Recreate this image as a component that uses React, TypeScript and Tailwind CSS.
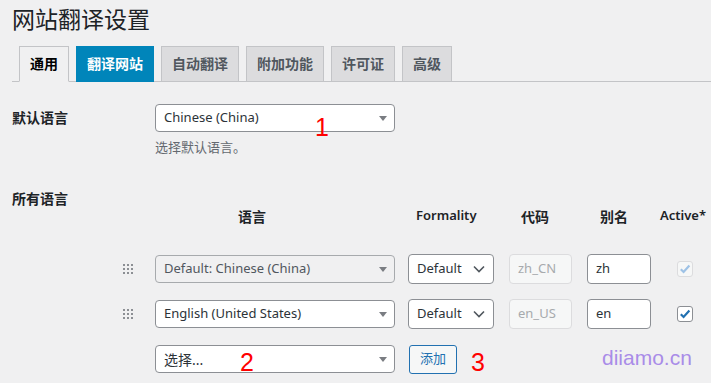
import type { ReactNode } from 'react';

const tabs = [
  { label: '通用', kind: 'active' },
  { label: '翻译网站', kind: 'blue' },
  { label: '自动翻译', kind: 'plain' },
  { label: '附加功能', kind: 'plain' },
  { label: '许可证', kind: 'plain' },
  { label: '高级', kind: 'plain' },
];

const tabClass: Record<string, string> = {
  active: 'bg-[#f0f0f1] border-[#c3c4c7] border-b-[#f0f0f1] text-black',
  blue: 'bg-[#0085ba] border-[#0085ba] text-white',
  plain: 'bg-[#dcdcde] border-[#c3c4c7] text-[#50575e]',
};

function Triangle() {
  return (
    <svg width="8" height="5" viewBox="0 0 8 5" className="shrink-0">
      <path d="M0 0 H8 L4 5 Z" fill="#7a7d82" />
    </svg>
  );
}

function Chevron() {
  return (
    <svg width="12" height="8" viewBox="0 0 12 8" className="shrink-0">
      <path d="M1 1.5 L6 6.5 L11 1.5" fill="none" stroke="#50575e" strokeWidth="1.6" />
    </svg>
  );
}

function DragHandle() {
  const dots: ReactNode[] = [];
  for (let r = 0; r < 3; r++) {
    for (let c = 0; c < 3; c++) {
      dots.push(<rect key={`${r}-${c}`} x={c * 4} y={r * 4} width="2" height="2" fill="#8c8f94" />);
    }
  }
  return (
    <svg width="10" height="10" viewBox="0 0 10 10" className="shrink-0">
      {dots}
    </svg>
  );
}

function Check({ disabled }: { disabled?: boolean }) {
  return (
    <div
      className={
        disabled
          ? 'w-4 h-4 rounded-[3px] border border-[#dcdcde] bg-[#f6f7f7] flex items-center justify-center'
          : 'w-4 h-4 rounded-[3px] border border-[#8c8f94] bg-white flex items-center justify-center'
      }
    >
      <svg width="12" height="12" viewBox="0 0 12 12">
        <path
          d="M1.8 6.2 L4.6 9 L10.4 2.6"
          fill="none"
          stroke={disabled ? '#9ec2e6' : '#2271b1'}
          strokeWidth="2.2"
        />
      </svg>
    </div>
  );
}

export default function App() {
  return (
    <div className="relative w-[711px] h-[383px] overflow-hidden bg-[#f0f0f1] text-[14px] text-[#2c3338] font-['Noto_Sans','Noto_Sans_CJK_SC',sans-serif]">
      {/* 标题 */}
      <h1 className="pl-3 pt-[5px] text-[23px] leading-[29px] font-normal text-[#1d2327]">网站翻译设置</h1>

      {/* 标签页 */}
      <nav className="mt-3 ml-3 h-[36px] flex items-start border-b border-[#c3c4c7]">
        {tabs.map((t) => (
          <div
            key={t.label}
            className={`ml-[7px] h-[36px] px-[10px] border text-[14px] leading-[34px] font-semibold ${tabClass[t.kind]}`}
          >
            {t.label}
          </div>
        ))}
      </nav>

      {/* 默认语言 */}
      <div className="flex items-start pt-[22px] pl-3">
        <div className="w-[143px] leading-[28px] font-semibold text-[#1d2327]">默认语言</div>
        <div className="flex flex-col">
          <div className="w-[240px] h-[28px] rounded-[4px] border border-[#8c8f94] bg-white pl-2 pr-[7px] flex items-center justify-between">
            <span className="text-[13px]">Chinese (China)</span>
            <Triangle />
          </div>
          <p className="mt-[5px] text-[13px] leading-[20px] text-[#646970]">选择默认语言。</p>
        </div>
      </div>

      {/* 所有语言 */}
      <div className="flex items-start mt-[28px] pl-3">
        <div className="w-[98px] leading-[28px] font-semibold text-[#1d2327]">所有语言</div>
        <div className="flex flex-col">
          <div className="flex items-center pt-[21px] h-[41px] font-semibold text-[#1d2327]">
            <div className="w-[284px] text-center">语言</div>
            <div className="ml-[22px] w-[60px] text-center text-[13px]">Formality</div>
            <div className="ml-[45px] w-[28px] text-center">代码</div>
            <div className="ml-[51px] w-[28px] text-center">别名</div>
            <div className="ml-[32px] text-[13px]">Active*</div>
          </div>

          <div className="mt-[28px] flex flex-col gap-[15px] pl-[13px] text-[13px]">
            {/* 行 1 */}
            <div className="flex items-center h-[30px]">
              <DragHandle />
              <div className="ml-[22px] w-[240px] h-[28px] rounded-[4px] border border-[#a7aaad] bg-[#f0f0f1] pl-2 pr-[7px] flex items-center justify-between text-[#50575e]">
                <span>Default: Chinese (China)</span>
                <Triangle />
              </div>
              <div className="ml-[13px] w-[86px] h-[30px] rounded-[4px] border border-[#8c8f94] bg-white pl-2 pr-[8px] flex items-center justify-between">
                <span>Default</span>
                <Chevron />
              </div>
              <div className="ml-[15px] w-[63px] h-[30px] rounded-[4px] border border-[#dcdcde] bg-[#f6f7f7] pl-2 flex items-center text-[#a7aaad]">zh_CN</div>
              <div className="ml-[15px] w-[64px] h-[30px] rounded-[4px] border border-[#8c8f94] bg-white pl-2 flex items-center">zh</div>
              <div className="ml-[26px]">
                <Check disabled />
              </div>
            </div>

            {/* 行 2 */}
            <div className="flex items-center h-[30px]">
              <DragHandle />
              <div className="ml-[22px] w-[240px] h-[28px] rounded-[4px] border border-[#8c8f94] bg-white pl-2 pr-[7px] flex items-center justify-between">
                <span>English (United States)</span>
                <Triangle />
              </div>
              <div className="ml-[13px] w-[86px] h-[30px] rounded-[4px] border border-[#8c8f94] bg-white pl-2 pr-[8px] flex items-center justify-between">
                <span>Default</span>
                <Chevron />
              </div>
              <div className="ml-[15px] w-[63px] h-[30px] rounded-[4px] border border-[#dcdcde] bg-[#f6f7f7] pl-2 flex items-center text-[#a7aaad]">en_US</div>
              <div className="ml-[15px] w-[64px] h-[30px] rounded-[4px] border border-[#8c8f94] bg-white pl-2 flex items-center">en</div>
              <div className="ml-[26px]">
                <Check />
              </div>
            </div>

            {/* 行 3 */}
            <div className="flex items-center h-[30px]">
              <div className="w-[10px]" />
              <div className="ml-[22px] w-[240px] h-[28px] rounded-[4px] border border-[#8c8f94] bg-white pl-2 pr-[7px] flex items-center justify-between">
                <span className="text-[14px]">选择...</span>
                <Triangle />
              </div>
              <button className="ml-[14px] w-[48px] h-[29px] rounded-[3px] border border-[#2271b1] bg-[#f6f7f7] text-[13px] text-[#2271b1]">
                添加
              </button>
            </div>
          </div>
        </div>
      </div>

      {/* 标注 */}
      <span className="absolute left-[315px] top-[115px] text-[25px] leading-[25px] text-[#ff0000] font-['Liberation_Sans',sans-serif]">1</span>
      <span className="absolute left-[240px] top-[350px] text-[25px] leading-[25px] text-[#ff0000] font-['Liberation_Sans',sans-serif]">2</span>
      <span className="absolute left-[471px] top-[350px] text-[25px] leading-[25px] text-[#ff0000] font-['Liberation_Sans',sans-serif]">3</span>
      <span className="absolute left-[602px] top-[347px] text-[21px] leading-[21px] text-[#a98ce8] font-['Liberation_Sans',sans-serif]">diiamo.cn</span>
    </div>
  );
}
